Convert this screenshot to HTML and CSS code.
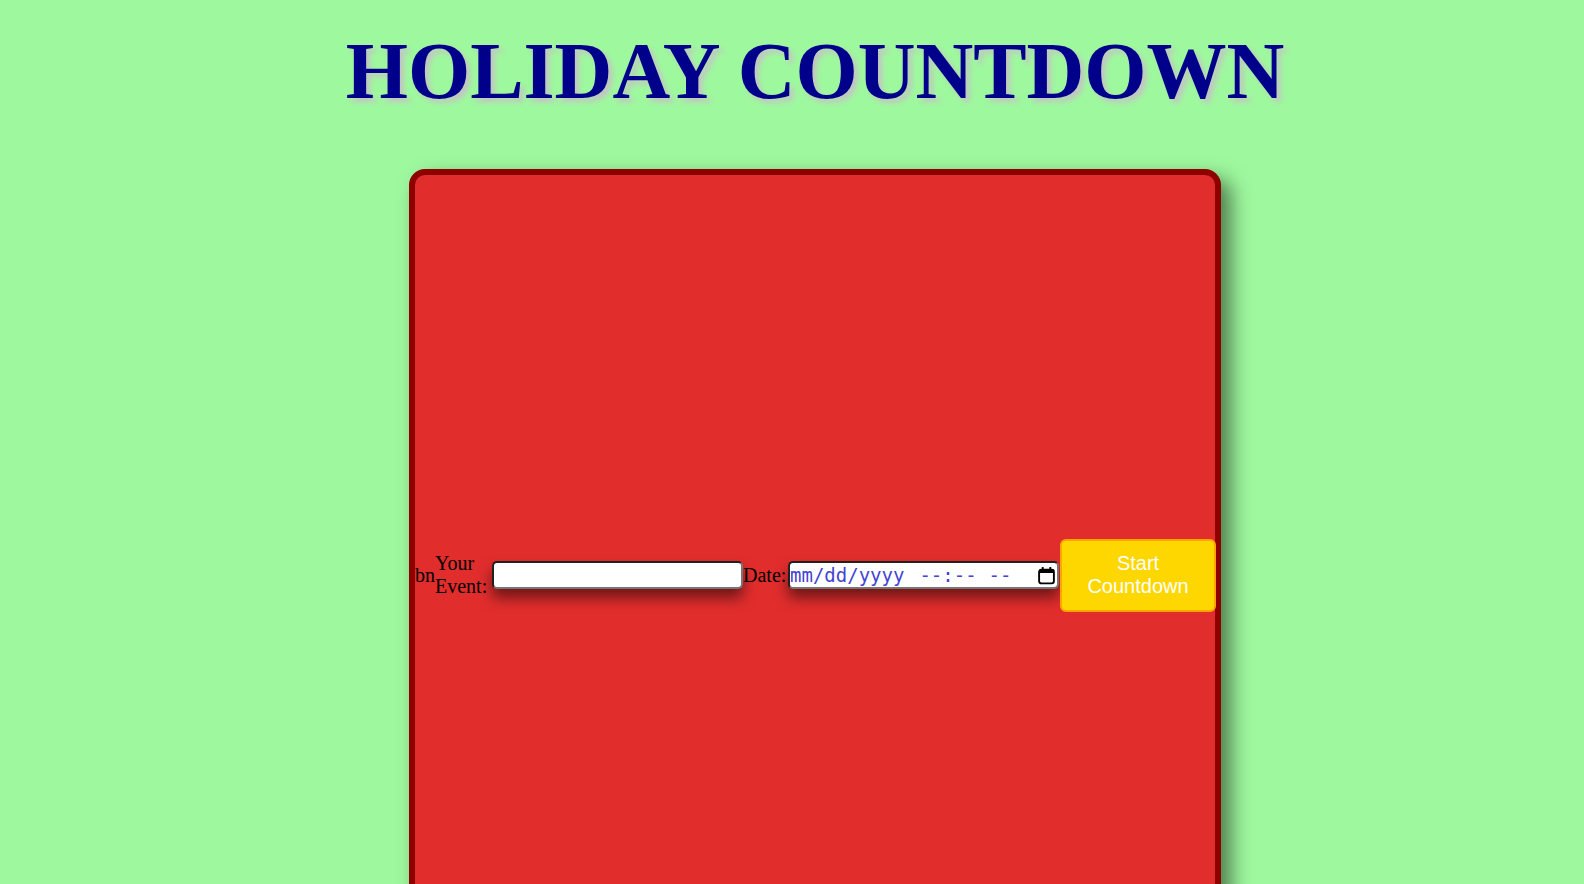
FILE: index.html
```html
<!DOCTYPE html>
<html lang="en">
<head>
<meta charset="utf-8">
<title>Holiday Countdown</title>
<link rel="stylesheet" href="styles.css">
</head>
<body>
<div class="page">
  <h1 class="title">HOLIDAY COUNTDOWN</h1>
  <div class="card">
    <div class="row">
      <span class="stray">bn</span>
      <label class="label label-event" for="event">Your Event:</label>
      <input class="field field-text" id="event" type="text">
      <label class="label label-date" for="date">Date:</label>
      <div class="field field-date" id="date" role="textbox" aria-label="Date">
        <span class="seg seg-date">mm/dd/yyyy</span>
        <span class="seg seg-time">--:--</span>
        <span class="seg seg-ampm">--</span>
        <svg class="cal" width="19" height="19" viewBox="0 0 18 18" aria-hidden="true">
          <rect x="2" y="3.5" width="14" height="13" rx="2" fill="none" stroke="#000" stroke-width="1.8"/>
          <rect x="2" y="3" width="14" height="3.6" rx="1" fill="#000"/>
          <rect x="4.5" y="1" width="1.8" height="3" fill="#000"/>
          <rect x="11.7" y="1" width="1.8" height="3" fill="#000"/>
        </svg>
      </div>
      <button class="start" type="button">Start Countdown</button>
    </div>
  </div>
</div>
</body>
</html>
```
FILE: styles.css
```css
html, body {
  margin: 0;
  padding: 0;
  background: #9ef89e;
}

.page {
  padding-left: 46px;
  display: flex;
  flex-direction: column;
  align-items: center;
}

.title {
  margin: 25px 0 52px;
  font-family: "Liberation Serif", "Times New Roman", serif;
  font-weight: bold;
  font-size: 80px;
  line-height: 92px;
  color: #00008b;
  text-shadow: 4px 4px 5px #c4c4c4;
  white-space: nowrap;
}

.card {
  width: 800px;
  height: 800px;
  background: #e22d2d;
  border: 6px solid #8e0000;
  border-radius: 16px;
  box-shadow: 10px 10px 20px rgba(0, 0, 0, 0.5);
  display: flex;
  align-items: center;
  flex-shrink: 0;
}

.row {
  display: flex;
  align-items: center;
  width: 800px;
  font-family: "Liberation Serif", "Times New Roman", serif;
  font-size: 20px;
  line-height: 23px;
  color: #000;
}

.stray {
  width: 20px;
  flex-shrink: 0;
}

.label-event {
  width: 54px;
  flex-shrink: 0;
}

.label-date {
  width: 44px;
  flex-shrink: 0;
}

.field {
  box-sizing: border-box;
  height: 28px;
  margin: 0;
  padding: 1px 2px;
  border: 2px inset #767676;
  border-radius: 5px;
  background: #fff;
  box-shadow: 0 9px 14px rgba(0, 0, 0, 0.5);
  flex-shrink: 0;
}

.field-text {
  width: 251px;
  margin-left: 3px;
  font-size: 18px;
}

.field-date {
  display: flex;
  align-items: center;
  width: 271px;
  margin-left: 1px;
  padding: 0 1px 0 0;
  font-family: "DejaVu Sans Mono", monospace;
  font-size: 19px;
  line-height: 22px;
  color: #4444d2;
  white-space: pre;
}

.seg-time {
  margin-left: 15px;
}

.seg-ampm {
  margin-left: 12px;
}

.cal {
  margin-left: auto;
  display: block;
}

.start {
  box-sizing: border-box;
  width: 156px;
  height: 73px;
  margin-left: 1px;
  padding: 0 20px;
  flex-shrink: 0;
  background: #ffd700;
  border: 2px solid #ffa500;
  border-radius: 6px;
  color: #fff;
  font-family: "Liberation Sans", Arial, sans-serif;
  font-size: 20px;
  line-height: 23px;
}
```
